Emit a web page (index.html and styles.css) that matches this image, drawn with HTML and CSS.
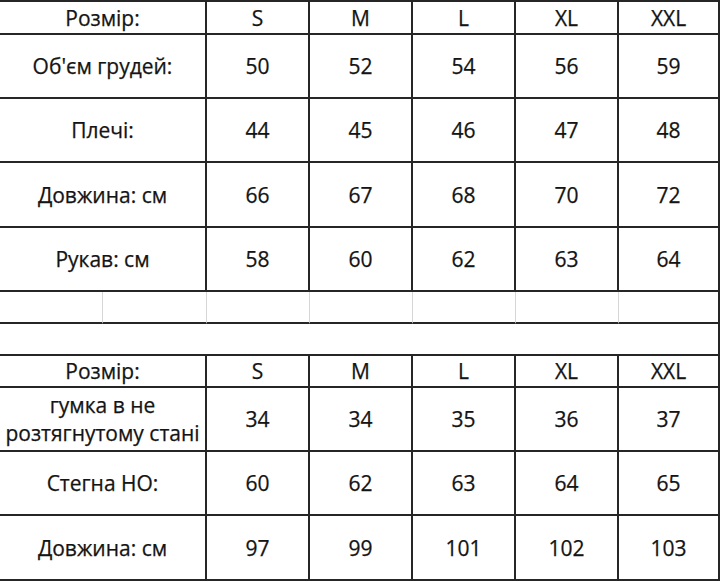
FILE: index.html
```html
<!DOCTYPE html>
<html lang="uk">
<head>
<meta charset="utf-8">
<title>Розмірна сітка</title>
<link rel="stylesheet" href="styles.css">
</head>
<body>
<div class="sheet">
  <div class="cell label">Розмір:</div>
  <div class="cell">S</div>
  <div class="cell">M</div>
  <div class="cell">L</div>
  <div class="cell">XL</div>
  <div class="cell">XXL</div>

  <div class="cell label">Об'єм грудей:</div>
  <div class="cell">50</div>
  <div class="cell">52</div>
  <div class="cell">54</div>
  <div class="cell">56</div>
  <div class="cell">59</div>

  <div class="cell label">Плечі:</div>
  <div class="cell">44</div>
  <div class="cell">45</div>
  <div class="cell">46</div>
  <div class="cell">47</div>
  <div class="cell">48</div>

  <div class="cell label">Довжина: см</div>
  <div class="cell">66</div>
  <div class="cell">67</div>
  <div class="cell">68</div>
  <div class="cell">70</div>
  <div class="cell">72</div>

  <div class="cell label">Рукав: см</div>
  <div class="cell">58</div>
  <div class="cell">60</div>
  <div class="cell">62</div>
  <div class="cell">63</div>
  <div class="cell">64</div>

  <div class="cell empty"></div>
  <div class="cell empty"></div>
  <div class="cell empty"></div>
  <div class="cell empty"></div>
  <div class="cell empty"></div>
  <div class="cell empty"></div>
  <div class="cell empty last"></div>

  <div class="cell gap"></div>

  <div class="cell label">Розмір:</div>
  <div class="cell">S</div>
  <div class="cell">M</div>
  <div class="cell">L</div>
  <div class="cell">XL</div>
  <div class="cell">XXL</div>

  <div class="cell label two">гумка в не<br>розтягнутому стані</div>
  <div class="cell">34</div>
  <div class="cell">34</div>
  <div class="cell">35</div>
  <div class="cell">36</div>
  <div class="cell">37</div>

  <div class="cell label">Стегна НО:</div>
  <div class="cell">60</div>
  <div class="cell">62</div>
  <div class="cell">63</div>
  <div class="cell">64</div>
  <div class="cell">65</div>

  <div class="cell label">Довжина: см</div>
  <div class="cell">97</div>
  <div class="cell">99</div>
  <div class="cell">101</div>
  <div class="cell">102</div>
  <div class="cell">103</div>
</div>
</body>
</html>
```

FILE: styles.css
```css
html, body {
  margin: 0;
  padding: 0;
  background: #ffffff;
}

.sheet {
  width: 720px;
  box-sizing: border-box;
  border-top: 2px solid #262626;
  display: grid;
  grid-template-columns: 103px 104px 103px 103px 103px 103px 101px;
  grid-template-rows: 33px 64px 64px 65px 64px 32px 32px 32px 64px 64px 65px;
  font-family: "Open Sans", "Noto Sans", sans-serif;
  font-size: 21px;
  color: #141414;
  -webkit-text-stroke: 0.25px #141414;
}

.cell {
  box-sizing: border-box;
  border-right: 2px solid #262626;
  border-bottom: 2px solid #262626;
  display: flex;
  align-items: center;
  justify-content: center;
  text-align: center;
  white-space: nowrap;
}

.label {
  grid-column: span 2;
}

.two {
  line-height: 28px;
}

.empty {
  border-right: 1px solid #d6d6d6;
}

.empty.last {
  border-right: 2px solid #262626;
}

.gap {
  grid-column: span 7;
}
```
